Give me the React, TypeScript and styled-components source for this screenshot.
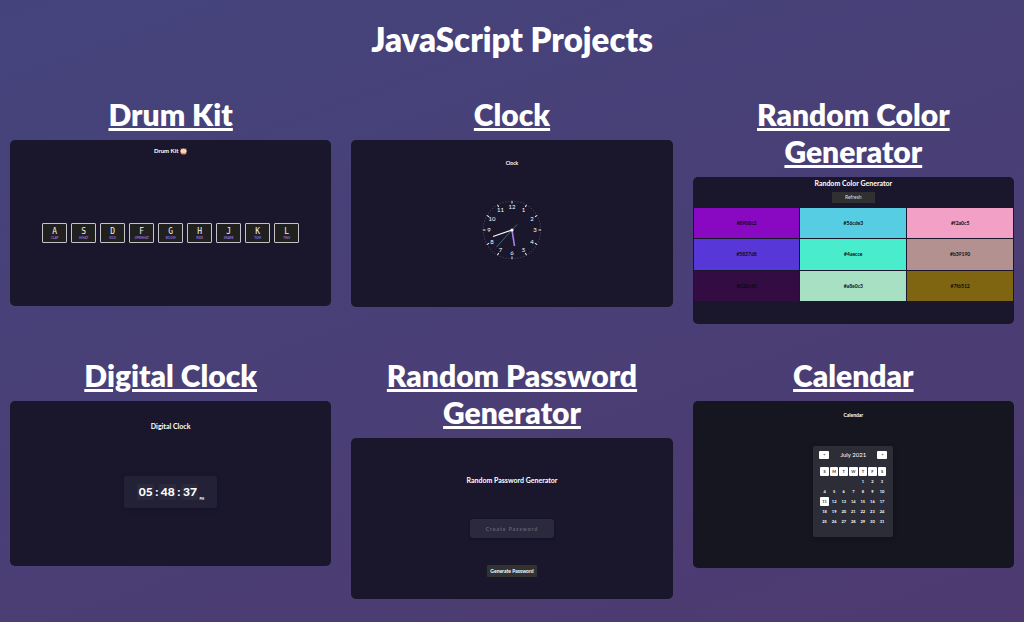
import React from "react";
import styled, { createGlobalStyle } from "styled-components";

const GlobalStyle = createGlobalStyle`
  *, *::before, *::after { box-sizing: border-box; }
  html { min-height: 100%; }
  body {
    margin: 0;
    min-height: 100vh;
    font-family: Lato, "Liberation Sans", sans-serif;
    color: #fff;
    background: linear-gradient(160deg, #44447c, #4e3a70) no-repeat;
  }
  button, input { font: inherit; margin: 0; border: 0; }
`;

const Page = styled.main`
  padding: 20px 10px;
`;

const PageTitle = styled.h1`
  margin: 0 0 38px;
  font-size: 33px;
  line-height: 38px;
  font-weight: 800;
  text-align: center;
`;

const Projects = styled.div`
  display: grid;
  grid-template-columns: repeat(3, minmax(0, 1fr));
  gap: 33px 20px;
  align-items: start;
`;

const Project = styled.article`
  display: flex;
  flex-direction: column;
  gap: 7px;
`;

const ProjectTitle = styled.h2`
  margin: 0;
  font-size: 30px;
  line-height: 37px;
  font-weight: 800;
  text-align: center;
`;

const ProjectLink = styled.a`
  color: inherit;
  text-decoration: underline;
  text-decoration-thickness: 3px;
  text-underline-offset: 2px;
`;

const Preview = styled.div<{ $height: number; $top: number; $dark?: boolean }>`
  display: flex;
  flex-direction: column;
  align-items: center;
  aspect-ratio: 321 / ${(p) => p.$height};
  padding-top: ${(p) => p.$top}px;
  border-radius: 5px;
  overflow: hidden;
  background: ${(p) => (p.$dark ? "#161621" : "#1a172c")};
`;

const PreviewTitle = styled.h3<{ $size: number; $gap: number }>`
  display: flex;
  align-items: center;
  gap: 2px;
  margin: 0 0 ${(p) => p.$gap}px;
  font-size: ${(p) => p.$size}px;
  line-height: 8px;
  font-weight: 700;
`;

const Keys = styled.div`
  display: flex;
  gap: 4px;
`;

const Key = styled.button`
  display: flex;
  flex-direction: column;
  align-items: center;
  width: 25px;
  height: 20px;
  padding: 3px 0 0;
  border: 1px solid #c4c4c8;
  border-radius: 1px;
  background: #20201f;
  color: #f2f2f2;
  font-family: "DejaVu Sans Mono", monospace;
  font-size: 8px;
  line-height: 9px;
`;

const Sound = styled.span`
  color: #9370db;
  font-family: Lato, sans-serif;
  font-size: 3px;
  line-height: 4px;
  font-weight: 700;
`;

const Face = styled.svg`
  width: 62px;
  height: 62px;
`;

const RefreshButton = styled.button`
  width: 43px;
  height: 11px;
  margin-bottom: 5px;
  padding: 0;
  background: #303030;
  color: #ddd;
  font-size: 5px;
  line-height: 11px;
`;

const Swatches = styled.div`
  display: grid;
  grid-template-columns: repeat(3, 1fr);
  grid-auto-rows: 1fr;
  gap: 1px;
  width: 100%;
  height: 93px;
  padding: 0 1px;
`;

const Swatch = styled.div<{ $color: string }>`
  display: flex;
  align-items: center;
  justify-content: center;
  background: ${(p) => p.$color};
  color: #0b0b0b;
  font-size: 5px;
  line-height: 8px;
  font-weight: 700;
`;

const TimeBox = styled.div`
  display: flex;
  align-items: center;
  justify-content: center;
  gap: 1px;
  width: 93px;
  height: 32px;
  border-radius: 3px;
  background: #232136;
  box-shadow: 0 1px 4px #15132a;
  font-size: 12px;
  line-height: 16px;
  font-weight: 900;
`;

const Digits = styled.span`
  width: 17px;
  border-radius: 2px;
  background: #2b293c;
  text-align: center;
`;

const Meridiem = styled.span`
  align-self: flex-end;
  padding-bottom: 7px;
  font-size: 3px;
  line-height: 4px;
`;

const PasswordInput = styled.input`
  width: 84px;
  height: 19px;
  margin-bottom: 27px;
  padding: 0;
  border-radius: 3px;
  background: #2b293d;
  box-shadow: 0 1px 3px #131124;
  color: #fff;
  font-size: 5px;
  font-weight: 700;
  text-align: center;
  &::placeholder { color: #66646f; opacity: 1; letter-spacing: 1px; }
`;

const GenerateButton = styled.button`
  width: 50px;
  height: 12px;
  padding: 0;
  border-radius: 1px;
  background: #323230;
  color: #fff;
  font-size: 5px;
  line-height: 12px;
  font-weight: 700;
  white-space: nowrap;
`;

const CalendarBox = styled.div`
  width: 80px;
  height: 91px;
  padding: 5px 6px;
  border-radius: 2px;
  background: #2d2d38;
  box-shadow: 0 1px 5px #12121c;
`;

const MonthBar = styled.div`
  display: flex;
  align-items: center;
  justify-content: space-between;
  margin-bottom: 7px;
  font-size: 6px;
  line-height: 8px;
  font-weight: 400;
`;

const MonthButton = styled.button`
  width: 10px;
  height: 8px;
  padding: 0;
  border-radius: 1px;
  background: #fff;
  color: #222;
  font-size: 4px;
  line-height: 8px;
  font-weight: 700;
`;

const Month = styled.table`
  width: 100%;
  table-layout: fixed;
  border-collapse: separate;
  border-spacing: 1px;
  font-size: 4px;
  line-height: 9px;
  font-weight: 700;
`;

const Day = styled.td<{ $marked?: boolean }>`
  height: 9px;
  padding: 0;
  border-radius: 1px;
  text-align: center;
  background: ${(p) => (p.$marked ? "#fff" : "transparent")};
  color: ${(p) => (p.$marked ? "#333" : "#fff")};
`;

const drumKeys = [
  ["A", "CLAP"], ["S", "HIHAT"], ["D", "KICK"], ["F", "OPENHAT"], ["G", "BOOM"],
  ["H", "RIDE"], ["J", "SNARE"], ["K", "TOM"], ["L", "TINK"],
];

const colors = [
  "#8908c2", "#56cde3", "#f2a0c5",
  "#5837d8", "#4aecce", "#b39190",
  "#320c43", "#a8e0c3", "#7f6512",
];

const weeks = [0, 1, 2, 3, 4].map((w) =>
  [0, 1, 2, 3, 4, 5, 6].map((d) => w * 7 + d - 3)
);

function DrumIcon() {
  return (
    <svg width="7" height="7" viewBox="0 0 14 14" aria-hidden="true">
      <path d="M1 5v5c0 4 12 4 12 0V5z" fill="#d9755a" />
      <path d="M2 7l3 4 2-3 2 3 3-4" fill="none" stroke="#f3c892" />
      <ellipse cx="7" cy="5.5" rx="6" ry="4.5" fill="#f6dfc0" />
      <path d="M2 1l4 4M12 1L8 5" stroke="#e2a65b" strokeWidth="1.5" />
    </svg>
  );
}

function ClockFace() {
  const ticks = Array.from({ length: 60 }, (_, i) => i);
  const hours = Array.from({ length: 12 }, (_, i) => i + 1);
  return (
    <Face viewBox="-31 -31 62 62" role="img" aria-label="Analog clock">
      {ticks.map((i) => (
        <line
          key={i}
          y1={i % 5 ? -28.4 : -26.5}
          y2="-29.2"
          stroke={i % 5 ? "#77758a" : "#eeeef4"}
          strokeWidth={i % 5 ? 0.7 : 1}
          transform={`rotate(${i * 6})`}
        />
      ))}
      {hours.map((h) => (
        <text
          key={h}
          x={Math.sin((h * Math.PI) / 6) * 23}
          y={-Math.cos((h * Math.PI) / 6) * 23 + 2}
          fill="#fff"
          fontSize="6"
          textAnchor="middle"
        >
          {h}
        </text>
      ))}
      <line x1="5" y1="-5.5" x2="-15.5" y2="17" stroke="#407f8c" strokeWidth="0.8" />
      <line x2="-19" y2="6.5" stroke="#fff" strokeWidth="1.1" />
      <line x2="2.5" y2="16" stroke="#a77fea" strokeWidth="1.6" />
      <circle r="1.6" fill="#fff" />
    </Face>
  );
}

function ProjectCard({ title, children }: { title: string; children: React.ReactNode }) {
  return (
    <Project>
      <ProjectTitle>
        <ProjectLink href="#">{title}</ProjectLink>
      </ProjectTitle>
      {children}
    </Project>
  );
}

export default function App() {
  return (
    <>
      <GlobalStyle />
      <Page>
        <PageTitle>JavaScript Projects</PageTitle>
        <Projects>
          <ProjectCard title="Drum Kit">
            <Preview $height={166} $top={7}>
              <PreviewTitle $size={6} $gap={68}>Drum Kit <DrumIcon /></PreviewTitle>
              <Keys>
                {drumKeys.map(([letter, sound]) => (
                  <Key key={letter}>{letter}<Sound>{sound}</Sound></Key>
                ))}
              </Keys>
            </Preview>
          </ProjectCard>

          <ProjectCard title="Clock">
            <Preview $height={167} $top={19}>
              <PreviewTitle $size={5} $gap={32}>Clock</PreviewTitle>
              <ClockFace />
            </Preview>
          </ProjectCard>

          <ProjectCard title="Random Color Generator">
            <Preview $height={147} $top={2}>
              <PreviewTitle $size={7} $gap={5}>Random Color Generator</PreviewTitle>
              <RefreshButton>Refresh</RefreshButton>
              <Swatches>
                {colors.map((c) => <Swatch key={c} $color={c}>{c}</Swatch>)}
              </Swatches>
            </Preview>
          </ProjectCard>

          <ProjectCard title="Digital Clock">
            <Preview $height={165} $top={21}>
              <PreviewTitle $size={7} $gap={46}>Digital Clock</PreviewTitle>
              <TimeBox>
                <Digits>05</Digits>:<Digits>48</Digits>:<Digits>37</Digits>
                <Meridiem>PM</Meridiem>
              </TimeBox>
            </Preview>
          </ProjectCard>

          <ProjectCard title="Random Password Generator">
            <Preview $height={161} $top={38}>
              <PreviewTitle $size={7} $gap={35}>Random Password Generator</PreviewTitle>
              <PasswordInput placeholder="Create Password" aria-label="Password" />
              <GenerateButton>Generate Password</GenerateButton>
            </Preview>
          </ProjectCard>

          <ProjectCard title="Calendar">
            <Preview $height={167} $top={10} $dark>
              <PreviewTitle $size={5} $gap={27}>Calendar</PreviewTitle>
              <CalendarBox>
                <MonthBar>
                  <MonthButton aria-label="Previous month">&lt;</MonthButton>
                  July 2021
                  <MonthButton aria-label="Next month">&gt;</MonthButton>
                </MonthBar>
                <Month>
                  <thead>
                    <tr>
                      {["S", "M", "T", "W", "T", "F", "S"].map((d, i) => (
                        <Day as="th" key={i} $marked>{d}</Day>
                      ))}
                    </tr>
                  </thead>
                  <tbody>
                    {weeks.map((week, i) => (
                      <tr key={i}>
                        {week.map((n) => (
                          <Day key={n} $marked={n === 11}>{n > 0 ? n : ""}</Day>
                        ))}
                      </tr>
                    ))}
                  </tbody>
                </Month>
              </CalendarBox>
            </Preview>
          </ProjectCard>
        </Projects>
      </Page>
    </>
  );
}
